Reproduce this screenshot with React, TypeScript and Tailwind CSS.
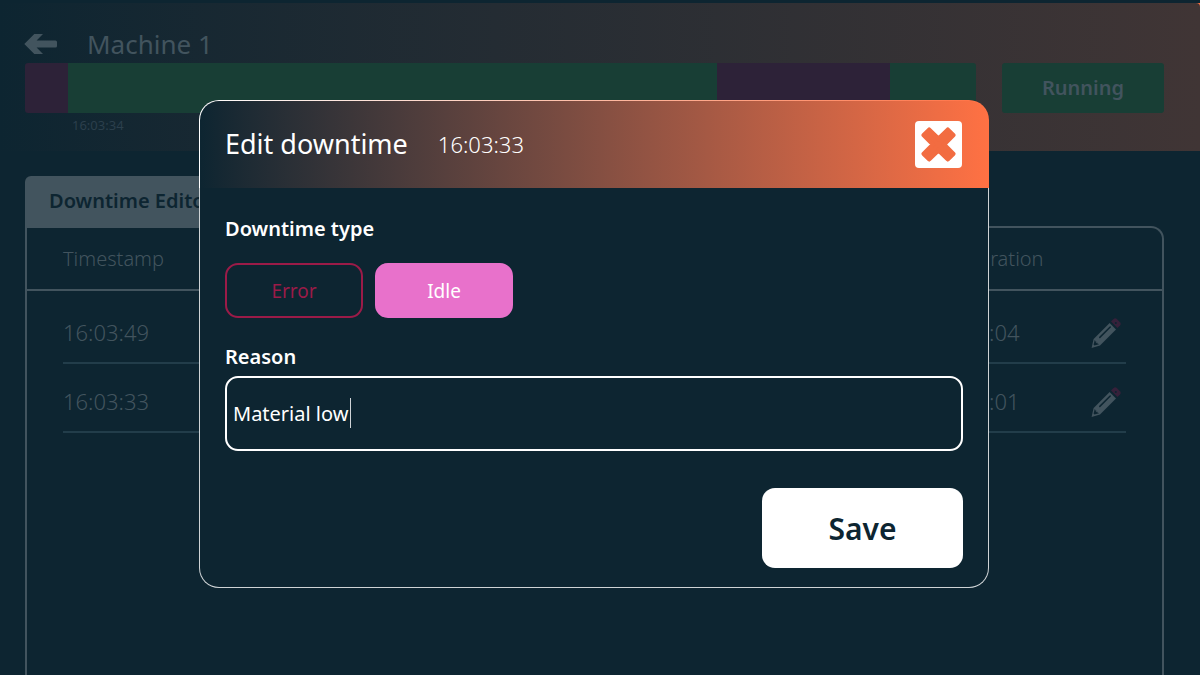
import { useState } from "react";

const timeline = [
  { state: "idle", span: 43 },
  { state: "running", span: 649 },
  { state: "idle", span: 173 },
  { state: "running", span: 86 },
];

const downtimes = [
  { timestamp: "16:03:49", duration: "00:04" },
  { timestamp: "16:03:33", duration: "00:01" },
];

function ArrowLeft() {
  return (
    <svg width="33" height="22" viewBox="0 0 33 22" fill="currentColor" aria-hidden="true">
      <path d="M0.3 11 10.3 1H19L12.6 7.5H31.5Q33 7.5 33 9V13Q33 14.5 31.5 14.5H12.6L19 21H10.3Z" />
    </svg>
  );
}

function Pencil() {
  return (
    <svg width="32" height="32" viewBox="0 0 32 32" aria-hidden="true">
      <path d="M1.6 31 3.6 22 19.6 6 26 12.4 10 28.4Z" fill="#42545e" />
      <path d="M9.8 20.4 20.2 10" stroke="#0d2531" strokeWidth="1.5" strokeLinecap="round" />
      <path d="M4.8 23 9 27.2 4.4 28.4 3.6 27.6Z" fill="#0d2531" />
      <path d="M5.6 22.6 6.4 25.6 9.4 26.4" stroke="#42545e" strokeWidth="1" fill="none" />
      <path
        d="M21 4.6 23.8 1.8Q25.2 .6 26.6 1.8L30.2 5.4Q31.4 6.8 30.2 8.2L27.4 11Z"
        fill="#36213a"
      />
      <circle cx="25.8" cy="6" r="1" fill="#0d2531" />
    </svg>
  );
}

function CloseIcon() {
  return (
    <svg width="35" height="35" viewBox="0 0 35 35" aria-hidden="true">
      <path
        d="M8.2 2.8 17.5 12 26.8 2.8 32.2 8.2 23 17.5 32.2 26.8 26.8 32.2 17.5 23 8.2 32.2 2.8 26.8 12 17.5 2.8 8.2Z"
        fill="#f26c41"
        stroke="#f26c41"
        strokeWidth="4.6"
        strokeLinejoin="round"
      />
    </svg>
  );
}

function MachinePage() {
  return (
    <main className="flex min-h-screen flex-col pt-[3px]">
      <div className="bg-linear-to-r from-[#0d2531] to-[#ff7143]">
        <header className="rounded-tr-[4px] bg-linear-to-r from-[#0d2531] to-[#403535] pr-9 pb-[17px] pl-6">
          <div className="flex h-[60px] items-center gap-[30px] pt-[22px] text-[#42545e]">
            <button type="button" aria-label="Back">
              <ArrowLeft />
            </button>
            <h1 className="text-[26px] leading-9">Machine 1</h1>
          </div>
          <div className="flex gap-[26px] pl-px">
            <div className="flex h-[50px] flex-1 overflow-hidden rounded-[3px]">
              {timeline.map((part, i) => (
                <div
                  key={i}
                  className={part.state === "idle" ? "bg-[#2d2238]" : "bg-[#183e35]"}
                  style={{ flexGrow: part.span }}
                />
              ))}
            </div>
            <button
              type="button"
              className="h-[50px] w-[162px] rounded-[3px] bg-[#183e35] text-[20px] font-semibold text-[#42545e]"
            >
              Running
            </button>
          </div>
          <p className="pt-1 pl-12 text-[13px] leading-[17px] text-[#2b3f4c]">16:03:34</p>
        </header>
      </div>

      <section className="mt-[25px] mr-9 ml-[25px] flex flex-1 flex-col">
        <h2 className="h-[50px] w-[212px] rounded-t-md bg-[#42545e] pl-6 text-[20px] leading-[50px] font-semibold text-[#0d2531]">
          Downtime Editor
        </h2>
        <div className="flex-1 rounded-tr-[13px] border-2 border-b-0 border-[#42545e]">
          <table className="w-full table-fixed text-left text-[#42545e]">
            <thead>
              <tr className="h-[62px] border-b-2 border-[#42545e] text-xl">
                <th className="pl-9 font-light">Timestamp</th>
                <th className="w-[126px] font-light">Duration</th>
                <th className="w-[72px]" aria-label="Edit" />
              </tr>
            </thead>
            <tbody className="before:block before:h-1">
              {downtimes.map((row) => (
                <tr key={row.timestamp} className="text-[22px] font-light">
                  <td className="pl-9">
                    <div className="flex h-[69px] items-center border-b-2 border-[#223d4a] pt-2">
                      {row.timestamp}
                    </div>
                  </td>
                  <td>
                    <div className="flex h-[69px] items-center border-b-2 border-[#223d4a] pt-2">
                      {row.duration}
                    </div>
                  </td>
                  <td className="pr-9">
                    <div className="flex h-[69px] items-center justify-end border-b-2 border-[#223d4a] pt-2 pr-1">
                      <button type="button" aria-label={`Edit ${row.timestamp}`}>
                        <Pencil />
                      </button>
                    </div>
                  </td>
                </tr>
              ))}
            </tbody>
          </table>
        </div>
      </section>
    </main>
  );
}

function EditDowntimeDialog() {
  const [type, setType] = useState("idle");
  const [reason, setReason] = useState("Material low");

  return (
    <div className="fixed inset-0 flex items-center justify-center pt-[13px] pr-3">
      <div
        role="dialog"
        aria-modal="true"
        aria-labelledby="dialog-title"
        className="w-full max-w-[790px] rounded-[20px] bg-[#0d2531]"
      >
        <div className="rounded-t-[20px] bg-linear-to-r from-white to-[#ff7143] px-px pt-px">
          <div className="flex h-[87px] items-center rounded-t-[19px] bg-linear-to-r from-[#0d2531] to-[#ff7143] pr-[26px] pl-[25px]">
            <h2 id="dialog-title" className="text-[27px] text-white">
              Edit downtime
            </h2>
            <span className="ml-[30px] text-[22px] font-light text-white">16:03:33</span>
            <button
              type="button"
              aria-label="Close"
              className="ml-auto flex size-[47px] items-center justify-center rounded bg-white"
            >
              <CloseIcon />
            </button>
          </div>
        </div>
        <form
          className="flex flex-col rounded-b-[20px] border border-t-0 border-white/80 px-[25px] pt-[26px] pb-[19px]"
          onSubmit={(e) => e.preventDefault()}
        >
          <p className="text-[20px] leading-[30px] font-semibold text-white">Downtime type</p>
          <div className="mt-[19px] flex gap-3">
            <button
              type="button"
              aria-pressed={type === "error"}
              onClick={() => setType("error")}
              className="h-[55px] w-[138px] rounded-[13px] border-2 border-[#9b1b48] pt-[2px] text-[19px] text-[#9b1b48]"
            >
              Error
            </button>
            <button
              type="button"
              aria-pressed={type === "idle"}
              onClick={() => setType("idle")}
              className="h-[55px] w-[138px] rounded-[13px] border-2 border-[#e871cb] bg-[#e871cb] pt-[2px] text-[19px] text-white"
            >
              Idle
            </button>
          </div>
          <label
            htmlFor="reason"
            className="mt-6 text-[20px] leading-[30px] font-semibold text-white"
          >
            Reason
          </label>
          <div className="relative mt-1">
            <input
              id="reason"
              value={reason}
              onChange={(e) => setReason(e.target.value)}
              className="h-[75px] w-full rounded-[13px] border-2 border-white bg-transparent px-[6px] text-xl text-white caret-transparent outline-none"
            />
            <span className="pointer-events-none absolute top-[22px] left-[125px] h-[30px] w-px bg-white/80" />
          </div>
          <button
            type="submit"
            className="mt-[37px] h-20 w-[201px] self-end rounded-[13px] bg-white text-[30px] font-semibold text-[#0d2531]"
          >
            Save
          </button>
        </form>
      </div>
    </div>
  );
}

export default function App() {
  return (
    <div className="min-h-screen bg-[#0d2531] font-['Noto_Sans',sans-serif]">
      <MachinePage />
      <EditDowntimeDialog />
    </div>
  );
}
